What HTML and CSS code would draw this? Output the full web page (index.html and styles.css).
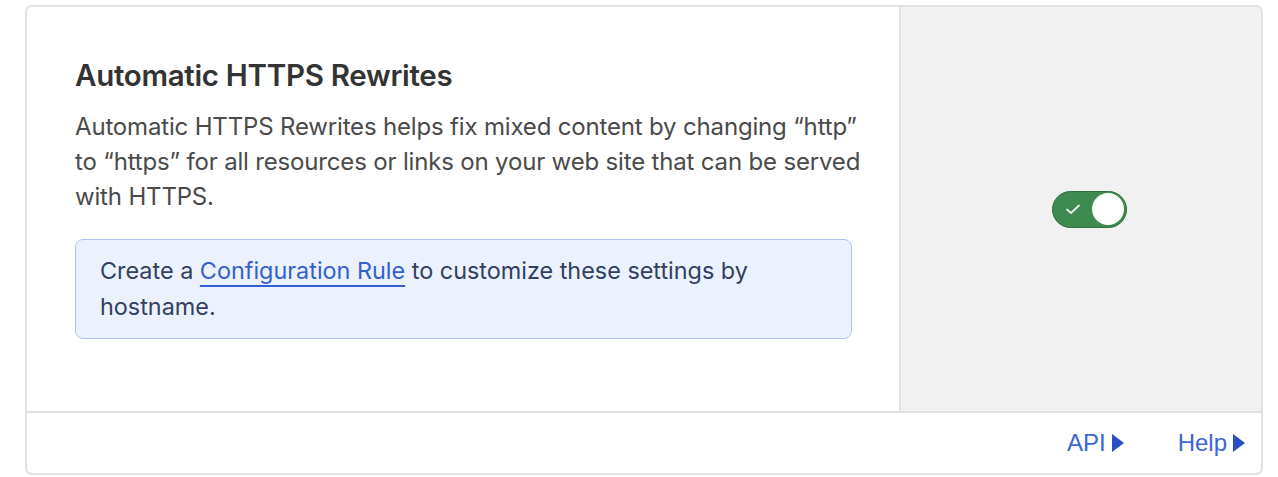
FILE: index.html
```html
<!DOCTYPE html>
<html lang="en">
<head>
<meta charset="utf-8">
<title>Automatic HTTPS Rewrites</title>
<link rel="stylesheet" href="styles.css">
</head>
<body>
<div class="card">
  <div class="card-main">
    <div class="card-content">
      <h2 class="title">Automatic HTTPS Rewrites</h2>
      <p class="desc">Automatic HTTPS Rewrites helps fix mixed content by changing “http” to “https” for all resources or links on your web site that can be served with HTTPS.</p>
      <div class="notice">Create a <a class="notice-link" href="#">Configuration Rule</a> to customize these settings by hostname.</div>
    </div>
    <div class="card-control">
      <button class="toggle" aria-pressed="true" aria-label="Automatic HTTPS Rewrites">
        <svg class="toggle-check" width="16" height="12" viewBox="0 0 16 12"><path d="M2 6.5 L6 10 L14 2.5" fill="none" stroke="#e8f3ea" stroke-width="1.8" stroke-linecap="round" stroke-linejoin="round"/></svg>
        <span class="toggle-knob"></span>
      </button>
    </div>
  </div>
  <div class="card-footer">
    <a class="footer-link" href="#">API<span class="caret"></span></a>
    <a class="footer-link" href="#">Help<span class="caret"></span></a>
  </div>
</div>
</body>
</html>
```
FILE: styles.css
```css
* { box-sizing: border-box; }
html, body { margin: 0; background: #ffffff; }
body {
  padding: 5px 15px 0 25px;
  font-family: Inter, "Noto Sans", "Liberation Sans", sans-serif;
}
.card {
  width: 1238px;
  border: 2px solid #e2e2e2;
  border-radius: 7px;
  overflow: hidden;
  background: #fff;
}
.card-main {
  display: flex;
  height: 406px;
  border-bottom: 2px solid #e2e2e2;
}
.card-content {
  width: 874px;
  padding: 50px 0 0 48px;
  border-right: 2px solid #e2e2e2;
}
.title {
  margin: 0;
  font-size: 29.5px;
  line-height: 36px;
  font-weight: 600;
  color: #333333;
  letter-spacing: -0.3px;
}
.desc {
  margin: 16px 0 0;
  width: 795px;
  font-size: 24px;
  line-height: 35px;
  color: #4a4a4a;
  letter-spacing: -0.17px;
}
.notice {
  margin-top: 25px;
  width: 777px;
  padding: 13px 24px;
  background: #ebf2fd;
  border: 1px solid #acc6f3;
  border-radius: 8px;
  font-size: 23.4px;
  line-height: 36px;
  color: #323f63;
}
.notice-link {
  color: #3360d0;
  text-decoration: underline;
  text-decoration-thickness: 2px;
  text-underline-offset: 6px;
}
.card-control {
  flex: 1;
  background: #f1f1f1;
  display: flex;
  align-items: center;
  justify-content: center;
  padding: 2px 0 2px 16px;
}
.toggle {
  width: 75px;
  height: 37px;
  border-radius: 19px;
  background: #3f8a4e;
  border: 1.5px solid #2f6f3d;
  padding: 0 2px 0 12px;
  display: flex;
  align-items: center;
  justify-content: space-between;
  cursor: pointer;
}
.toggle-check { display: block; }
.toggle-knob {
  width: 32px;
  height: 32px;
  border-radius: 50%;
  background: #ffffff;
}
.card-footer {
  height: 60px;
  display: flex;
  align-items: center;
  justify-content: flex-end;
  gap: 54px;
  padding: 0 16px 0 0;
}
.footer-link {
  display: flex;
  align-items: center;
  gap: 6px;
  font-family: "Liberation Sans", Arial, sans-serif;
  font-size: 24px;
  color: #3d66d4;
  text-decoration: none;
}
.caret {
  width: 0;
  height: 0;
  border-top: 9px solid transparent;
  border-bottom: 9px solid transparent;
  border-left: 12px solid #2a4fc4;
}
```
